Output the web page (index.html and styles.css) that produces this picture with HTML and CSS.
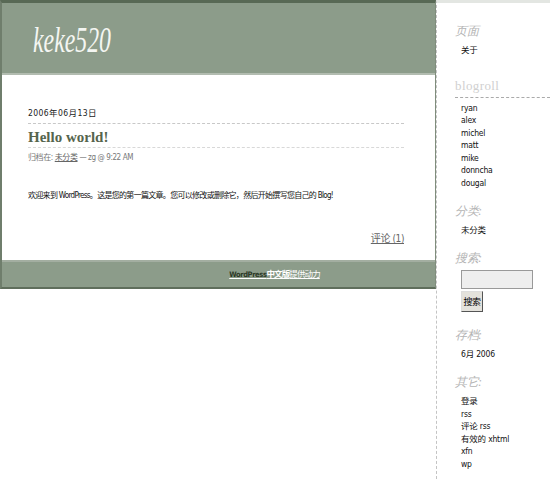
FILE: index.html
```html
<!DOCTYPE html>
<html>
<head>
<meta charset="utf-8">
<link rel="stylesheet" href="styles.css">
</head>
<body>
<div class="page">
  <div class="main">
    <div class="header"><h1 class="title"><span class="title-text">keke520</span></h1></div>
    <div class="content">
      <div class="date">2006年06月13日</div>
      <h2 class="post-title">Hello world!</h2>
      <div class="meta">归档在: <a href="#" class="gray-link">未分类</a> — zg @ 9:22 AM</div>
      <p class="body-text">欢迎来到 WordPress。这是您的第一篇文章。您可以修改或删除它，然后开始撰写您自己的 Blog!</p>
      <div class="comments"><a href="#" class="gray-link">评论 (1)</a></div>
    </div>
    <div class="footer"><a href="#" class="credit"><span class="wp">WordPress</span><b>中文版</b>提供动力</a></div>
  </div>
  <div class="sidebar">
    <h3 class="side-h">页面</h3>
    <ul class="side-list"><li>关于</li></ul>
    <h3 class="side-h blogroll">blogroll</h3>
    <ul class="side-list">
      <li>ryan</li><li>alex</li><li>michel</li><li>matt</li><li>mike</li><li>donncha</li><li>dougal</li>
    </ul>
    <h3 class="side-h">分类:</h3>
    <ul class="side-list"><li>未分类</li></ul>
    <h3 class="side-h">搜索:</h3>
    <div class="search">
      <input type="text" class="search-input">
      <button class="search-btn">搜索</button>
    </div>
    <h3 class="side-h">存档:</h3>
    <ul class="side-list"><li>6月 2006</li></ul>
    <h3 class="side-h">其它:</h3>
    <ul class="side-list">
      <li>登录</li><li>rss</li><li>评论 rss</li><li>有效的 xhtml</li><li>xfn</li><li>wp</li>
    </ul>
  </div>
</div>
</body>
</html>
```
FILE: styles.css
```css
html, body { margin: 0; padding: 0; background: #fff; }
body { font-family: "Liberation Sans Narrow", "DejaVu Sans Condensed", "Noto Sans CJK SC", sans-serif; font-size: 9px; color: #000; }
.page { display: flex; align-items: flex-start; }
.main {
  width: 433px;
  flex: none;
  border-left: 2px solid #6f7e6c;
  border-right: 1px solid #7f8d7c;
  border-top: 3px solid #586955;
  border-bottom: 2px solid #5f6e5c;
}
.header { height: 72px; background: #8c9c8a; border-bottom: 2px solid #b2bcb0; box-sizing: border-box; }
.title {
  margin: 0;
  padding: 20px 0 0 31px;
  font-family: "Liberation Serif", serif;
  font-style: italic;
  font-weight: normal;
  font-size: 35px;
  line-height: 36px;
  color: #f4f6f2;
}
.title-text { display: inline-block; transform: scaleX(0.68); transform-origin: left center; }
.content { height: 185px; padding: 31px 31px 0 26px; box-sizing: border-box; }
.date {
  font-family: "DejaVu Sans Condensed", "Noto Sans CJK SC", sans-serif;
  font-size: 8.5px;
  letter-spacing: 0.4px;
  color: #222;
  line-height: 14px;
  padding-bottom: 3px;
  border-bottom: 1px dashed #c8c8c8;
}
.post-title {
  margin: 5px 0 0 0;
  font-family: "Liberation Serif", serif;
  font-size: 15px;
  font-weight: bold;
  color: #56654d;
  line-height: 17px;
  padding-bottom: 1px;
  border-bottom: 1px dashed #d8d8d8;
}
.meta { color: #777; font-size: 8px; margin-top: 4px; line-height: 12px; letter-spacing: -0.4px; }
.gray-link { color: #666; text-decoration: underline; }
.body-text { margin: 25px 0 0 0; font-size: 8px; letter-spacing: -0.7px; line-height: 14px; color: #111; white-space: nowrap; }
.comments { text-align: right; margin-top: 29px; font-size: 10px; line-height: 14px; letter-spacing: -0.4px; }
.footer {
  height: 27px;
  background: #8c9c8a;
  border-top: 2px solid #a3aea1;
  box-sizing: border-box;
  text-align: center;
  padding: 5px 0 0 112px;
  line-height: 14px;
}
.credit { color: #fff; font-size: 8.5px; text-decoration: underline; letter-spacing: -0.9px; }
.credit .wp { color: #2d3a27; font-weight: bold; font-size: 7.5px; letter-spacing: -0.4px; }
.credit b { font-weight: bold; }
.sidebar {
  flex: 1;
  min-height: 480px;
  border-left: 1px dashed #c4c4c4;
  border-top: 3px solid #e3e6e2;
  box-sizing: border-box;
  padding: 20px 0 0 18px;
}
.side-h {
  margin: 0;
  font-family: "Liberation Serif", serif;
  font-style: italic;
  font-weight: normal;
  font-size: 12px;
  letter-spacing: -0.5px;
  line-height: 17px;
  color: #b4b4b4;
}
.side-h.blogroll { font-style: normal; font-size: 13px; letter-spacing: 0.4px; color: #d0d0d0; border-bottom: 1px dashed #aaa; padding-bottom: 3px; margin-top: 20px; }
.side-list { list-style: none; margin: 4px 0 13.5px 0; padding: 0 0 0 6px; line-height: 12.5px; font-size: 8.5px; letter-spacing: -0.2px; color: #111; }
.search { padding-left: 6px; margin: 3px 0 15.5px 0; display: flex; flex-direction: column; align-items: flex-start; gap: 2px; }
.search-input { width: 72px; height: 19px; box-sizing: border-box; border: 1px solid #999; background: #eee; padding: 0; }
.search-btn { height: 21px; width: 22px; padding: 0; font-size: 9px; letter-spacing: -0.5px; background: #e4e2dc; border: 1px solid #777; border-color: #ddd #555 #555 #ddd; font-family: "Noto Sans CJK SC", sans-serif; }
```
